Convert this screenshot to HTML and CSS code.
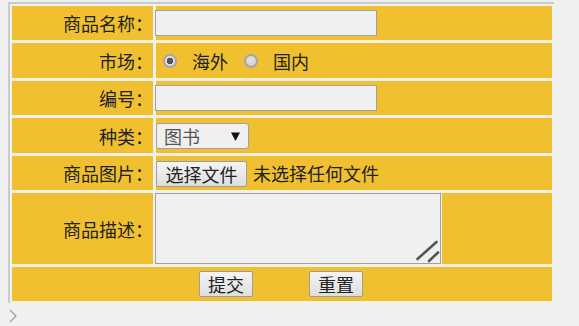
FILE: index.html
```html
<!DOCTYPE html>
<html lang="zh-CN">
<head>
<meta charset="utf-8">
<title>商品信息</title>
<link rel="stylesheet" href="styles.css">
</head>
<body>
<div class="frame">
  <form class="grid">
    <div class="lbl">商品名称：</div>
    <div class="val"><input type="text" class="txt"></div>

    <div class="lbl">市场：</div>
    <div class="val">
      <label class="opt"><input type="radio" name="m" checked><span>海外</span></label>
      <label class="opt"><input type="radio" name="m"><span>国内</span></label>
    </div>

    <div class="lbl">编号：</div>
    <div class="val"><input type="text" class="txt"></div>

    <div class="lbl">种类：</div>
    <div class="val">
      <span class="sel">
        <select><option>图书</option></select>
        <svg class="arrow" width="9" height="9" viewBox="0 0 9 9"><polygon points="0,0.5 9,0.5 4.5,9" fill="#111"/></svg>
      </span>
    </div>

    <div class="lbl">商品图片：</div>
    <div class="val"><span class="btn filebtn">选择文件</span><span class="nofile">未选择任何文件</span></div>

    <div class="lbl">商品描述：</div>
    <div class="val top">
      <span class="ta">
        <textarea></textarea>
        <svg class="grip" width="26" height="26" viewBox="0 0 26 26"><line x1="2.5" y1="21" x2="21.5" y2="4" stroke="#555" stroke-width="2.6" stroke-linecap="round"/><line x1="14" y1="23" x2="23" y2="14.5" stroke="#555" stroke-width="2.6" stroke-linecap="round"/></svg>
      </span>
    </div>

    <div class="actions">
      <button type="button" class="btn">提交</button>
      <button type="button" class="btn">重置</button>
    </div>
  </form>
</div>
<svg class="chev" width="8" height="14" viewBox="0 0 8 14"><polyline points="1,1 7,7 1,13" fill="none" stroke="#9a9a9a" stroke-width="1.2"/></svg>
</body>
</html>
```

FILE: styles.css
```css
html, body {
  margin: 0;
  padding: 0;
  background: #f0f0f0;
  overflow: hidden;
}

body {
  font-family: "Noto Sans CJK SC", "Noto Sans", sans-serif;
  font-size: 18px;
  color: #222;
}

.frame {
  margin: 2px 0 0 8px;
  width: 540px;
  padding: 2px;
  border-top: 2px solid #cbcbcb;
  border-left: 2px solid #cbcbcb;
}

.grid {
  margin: 0;
  display: grid;
  grid-template-columns: 141px 396px;
  grid-template-rows: 34px 35px 34px 35px 34px 71px 34px;
  gap: 3px;
}

.lbl,
.val,
.actions {
  background: #f0c030;
  box-shadow: 0 1px 0 #f8f0d4;
}

.lbl {
  display: flex;
  align-items: center;
  justify-content: flex-end;
  line-height: 1;
  white-space: nowrap;
}

.val {
  display: flex;
  align-items: center;
}

.val.top {
  align-items: stretch;
}

.txt {
  box-sizing: border-box;
  width: 222px;
  height: 26px;
  margin: 0 0 0 -1px;
  padding: 0 3px;
  border: 1px solid #a0a0a0;
  background: #f0f0f0;
  outline: none;
}

.opt {
  display: flex;
  align-items: center;
  line-height: 1;
}

.opt input {
  appearance: none;
  -webkit-appearance: none;
  box-sizing: border-box;
  width: 14px;
  height: 14px;
  margin: 0 15px 0 7px;
  border: 2px solid #a6a6a6;
  border-radius: 50%;
  background: radial-gradient(circle at 50% 40%, #e2e2e2 0, #cdcdcd 100%);
}

.opt input:checked {
  background: radial-gradient(circle, #555 0 3px, #e2e2e2 3.6px);
}

.opt + .opt input {
  margin-left: 16px;
}

.sel {
  position: relative;
  display: block;
}

.sel select {
  appearance: none;
  -webkit-appearance: none;
  box-sizing: border-box;
  display: block;
  width: 93px;
  height: 26px;
  margin: 0;
  padding: 0 0 0 7px;
  border: 1px solid #a0a0a0;
  border-radius: 3px;
  background: #f0f0f0;
  font: inherit;
  font-size: 18px;
  line-height: 24px;
  color: #555;
}

.sel .arrow {
  position: absolute;
  left: 75px;
  top: 9px;
  pointer-events: none;
}

.btn {
  box-sizing: border-box;
  display: inline-flex;
  align-items: center;
  justify-content: center;
  height: 26px;
  margin: 0;
  padding: 0;
  border: 1px solid #9c9c9c;
  border-radius: 2px;
  background: linear-gradient(#f4f4f4, #dedede);
  font: inherit;
  font-size: 18px;
  line-height: 1;
  color: #222;
}

.filebtn {
  width: 91px;
  margin-top: 2px;
}

.nofile {
  margin-left: 6px;
  line-height: 1;
}

.ta {
  position: relative;
  display: block;
  margin: 0 0 0 -1px;
}

.ta textarea {
  box-sizing: border-box;
  display: block;
  width: 286px;
  height: 71px;
  margin: 0;
  padding: 2px;
  border: 1px solid #a0a0a0;
  background: #f0f0f0;
  resize: none;
  outline: none;
  box-shadow: 1px 0 0 #f6f0dc;
}

.ta .grip {
  position: absolute;
  right: 0;
  bottom: 0;
  pointer-events: none;
}

.actions {
  grid-column: 1 / 3;
  display: flex;
  align-items: center;
  justify-content: center;
  gap: 56px;
  padding-right: 2px;
}

.actions .btn {
  width: 54px;
}

.chev {
  display: block;
  margin: 6px 0 0 9px;
}
```
